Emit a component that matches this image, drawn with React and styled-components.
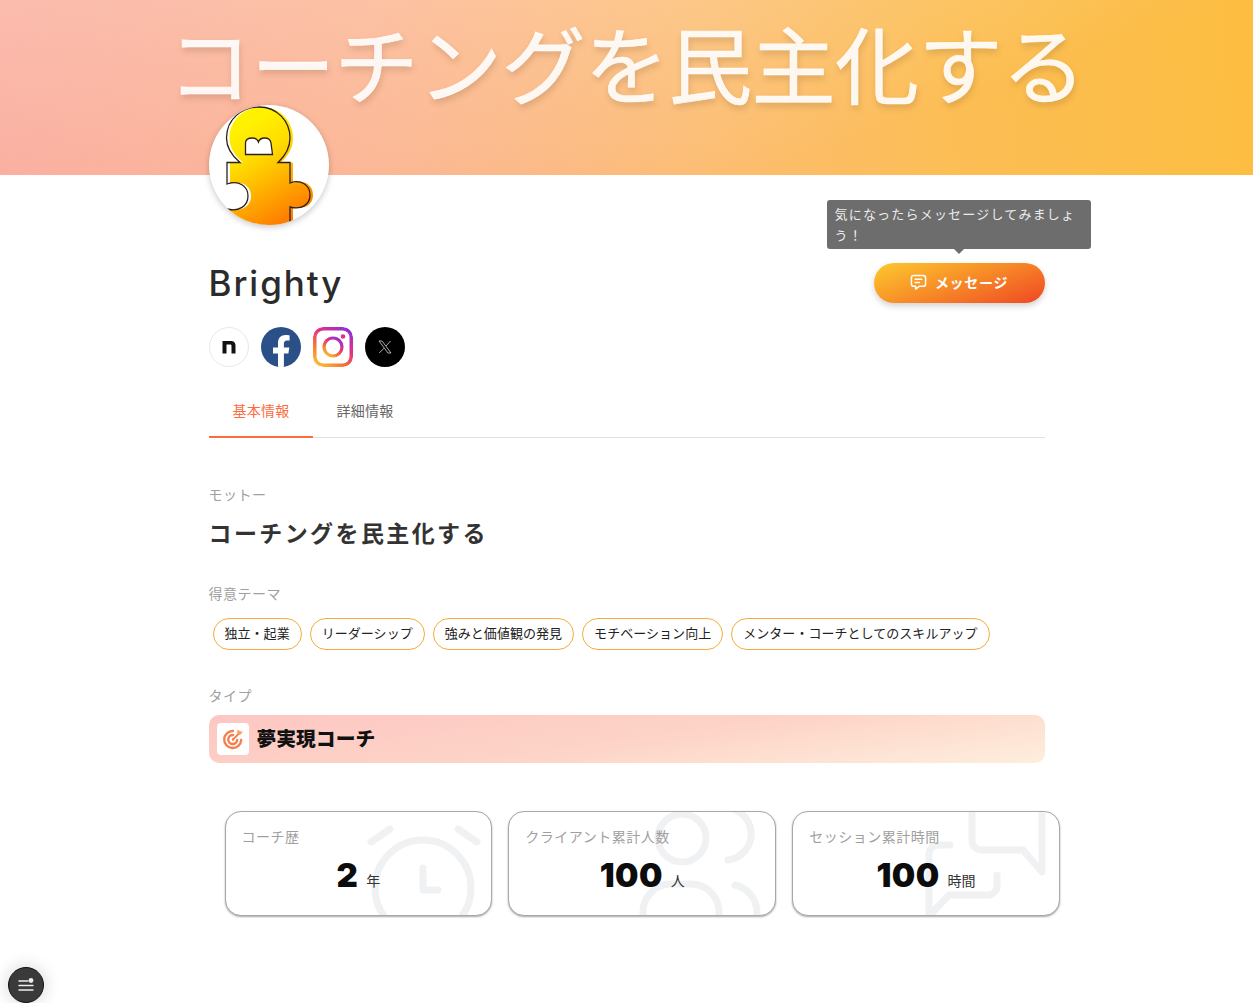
import React from "react";
import styled, { createGlobalStyle } from "styled-components";

const Global = createGlobalStyle`
  html, body { margin: 0; padding: 0; background: #fff; }
  body { font-family: "Noto Sans CJK JP", "Noto Sans", sans-serif; color: #333; overflow-x: hidden; }
  * { box-sizing: border-box; }
`;
const Page = styled.div`height: 1003px; overflow: hidden;`;
const Hero = styled.header`
  height: 175px;
  background: linear-gradient(160deg, rgba(255,255,255,.32), rgba(255,255,255,.14) 45%, rgba(255,255,255,0) 72%),
    linear-gradient(84deg, #f99b88 0%, #fbae88 30%, #fcbc72 55%, #fcbe55 75%, #fcbd40 100%);
  display: flex;
  justify-content: center;
  overflow: hidden;
`;
const HeroTitle = styled.h1`
  margin: 0;
  padding: 1px 0 0;
  font-size: 84px;
  line-height: 122px;
  height: 123px;
  font-weight: 400;
  letter-spacing: -0.6px;
  white-space: nowrap;
  color: rgba(255, 255, 255, 0.9);
  -webkit-text-stroke: 0.7px rgba(255, 255, 255, 0.85);
  text-shadow: 1px 4px 6px rgba(120, 80, 40, 0.24);
`;
const Main = styled.main`width: 836px; margin: 0 auto; position: relative;`;
const AvatarWrap = styled.div`
  width: 120px; height: 120px; border-radius: 50%;
  margin-top: -70px; background: #fff; overflow: hidden;
  box-shadow: 0 2px 6px rgba(0,0,0,.22);
  position: relative;
`;
const NameRow = styled.div`
  margin-top: 38px; height: 40px;
  display: flex; justify-content: space-between; align-items: center;
`;
const Name = styled.h2`
  margin: 0; font-family: Inter, sans-serif; font-size: 35px; font-weight: 500;
  letter-spacing: 1.95px; line-height: 40px; color: #2b2b2b;
`;
const MessageWrap = styled.div`position: relative;`;
const Tooltip = styled.div`
  position: absolute; left: -47px; bottom: 54px; width: 264px;
  background: #6d6d6d; color: #ececec; border-radius: 3px;
  font-size: 13px; line-height: 21px; letter-spacing: 1.2px; padding: 3px 8px 4px;
  &::after {
    content: ""; position: absolute; left: 127px; bottom: -5px;
    border-left: 5px solid transparent; border-right: 5px solid transparent; border-top: 5px solid #6d6d6d;
  }
`;
const MessageButton = styled.button`
  width: 171px; height: 40px; border: 0; border-radius: 20px;
  background: linear-gradient(160deg, #fdc92e 0%, #f78a27 50%, #ef4723 100%);
  box-shadow: 0 3px 6px rgba(0,0,0,.18);
  color: #fff; font-family: inherit; font-size: 14px; font-weight: 700; letter-spacing: .7px;
  display: flex; align-items: center; justify-content: center; gap: 8px; padding: 0 0 2px;
`;
const Socials = styled.div`display: flex; gap: 12px; margin-top: 24px;`;
const Social = styled.a`
  width: 40px; height: 40px; border-radius: ${p => p.$square ? "10px" : "50%"};
  background: ${p => p.$bg || "#fff"};
  border: ${p => p.$outlined ? "1px solid #e8e8e8" : "0"};
  display: flex; align-items: center; justify-content: center; overflow: hidden;
`;
const Tabs = styled.nav`display: flex; margin-top: 21px; border-bottom: 1px solid #e0e0e0; height: 50px;`;
const Tab = styled.div`
  width: 104px; height: 50px; display: flex; align-items: center; justify-content: center;
  font-size: 14px; letter-spacing: .2px; padding: 0 0 4px 1px;
  color: ${p => p.$active ? "#fb6d3f" : "#666"};
  border-bottom: 2px solid ${p => p.$active ? "#fb6d3f" : "transparent"};
`;
const Label = styled.div`
  font-size: 14px; line-height: 20px; letter-spacing: .5px; color: #a0a0a0;
`;
const MottoLabel = styled(Label)`margin-top: 46px;`;
const Motto = styled.div`
  margin-top: 12px; font-size: 23px; line-height: 32px; font-weight: 700; letter-spacing: 2.4px; color: #333;
`;
const ThemeLabel = styled(Label)`margin-top: 35px;`;
const Chips = styled.div`display: flex; gap: 8px; margin: 15px 0 0 4px;`;
const Chip = styled.span`
  height: 32px; border: 1px solid #f5ac3c; border-radius: 16px; padding: 0 11px 4px;
  display: flex; align-items: center; font-size: 13px; letter-spacing: .04px; color: #222; white-space: nowrap;
`;
const TypeLabel = styled(Label)`margin-top: 35px;`;
const TypeBar = styled.div`
  margin-top: 10px; height: 48px; border-radius: 10px; padding: 0 8px;
  background: linear-gradient(172deg, #fdc7c3 0%, #fdd3c6 50%, #feeedd 100%);
  display: flex; align-items: center; gap: 8px;
`;
const TypeIcon = styled.div`
  width: 32px; height: 32px; background: #fff; border-radius: 4px;
  display: flex; align-items: center; justify-content: center;
`;
const TypeName = styled.div`font-size: 19.8px; font-weight: 900; color: #111; padding-bottom: 3px;`;
const Stats = styled.section`
  width: 835.5px; margin: 48px 0 0 16px;
  display: grid; grid-template-columns: repeat(3, 1fr); gap: 16px;
`;
const Card = styled.article`
  position: relative; height: 105px; border: 1px solid #a8a8a8; border-radius: 16px; background: #fff;
  overflow: hidden; padding: 14px 16px; box-shadow: 0 1px 2px rgba(0,0,0,.35);
`;
const CardArt = styled.svg`
  position: absolute; left: 0; top: 0; width: 100%; height: 100%;
  fill: none; stroke: #f0f1f3; stroke-width: 7; stroke-linecap: round; stroke-linejoin: round;
`;
const CardLabel = styled(Label)`position: relative;`;
const CardValue = styled.div`
  position: relative; margin-top: 7px; display: flex; justify-content: center; align-items: flex-end; gap: 8px;
`;
const Number = styled.span`
  font-family: Inter, "Liberation Sans", sans-serif; font-size: 33px; line-height: 44px; font-weight: 900; color: #0c0c0c; letter-spacing: .4px;
`;
const Unit = styled.span`font-size: 14px; line-height: 20px; margin-bottom: 7px; color: #333;`;
const Fab = styled.button`
  position: fixed; left: 8px; top: 967px; width: 36px; height: 36px; border-radius: 50%;
  background: #3a3a3a; border: 1px solid #111; padding: 0;
  box-shadow: 0 0 14px 4px rgba(0,0,0,.1);
  display: flex; align-items: center; justify-content: center;
`;

const Avatar = () => {
  const d = "M31 57.5 C22 50 17.5 42 17.5 33 C17.5 14 33 2 50 2 C68 2 81 16 81 33 C81 43 76 51 69 57.5 H81 V78 C92 74 101 80 101 90 C101 100 92 105 81 102 V125 H18 V104 C30 107 39 101 39 91 C39 81 30 75 18 79 V57.5 Z";
  return (
    <AvatarWrap>
      <svg width="120" height="120" viewBox="0 0 120 120">
        <defs>
          <linearGradient id="pz" x1="0.3" y1="0.1" x2="0.65" y2="1">
            <stop offset="0" stopColor="#fff200" />
            <stop offset=".3" stopColor="#ffdc00" />
            <stop offset="1" stopColor="#ff7300" />
          </linearGradient>
        </defs>
        <path d={d} fill="url(#pz)" transform="translate(3 0)" />
        <path d={d} fill="none" stroke="#2a2218" strokeWidth="1.3" />
        <path d="M37 49.5 V38 C37 34 40 33 44 33 C47 33 49 34 50 37 C51 34 53 33 56 33 C60 33 62 34 62.5 38 L64 49.5 Z" fill="#fff" stroke="#2a2218" strokeWidth="1.3" transform="translate(-.5 0)" />
      </svg>
    </AvatarWrap>
  );
};

const Instagram = () => (
  <svg width="40" height="40" viewBox="0 0 40 40">
    <defs>
      <linearGradient id="ig" x1="0.15" y1="1" x2="0.85" y2="0">
        <stop offset="0" stopColor="#fdc33a" />
        <stop offset=".3" stopColor="#f7792f" />
        <stop offset=".6" stopColor="#e6347f" />
        <stop offset="1" stopColor="#8e2ee0" />
      </linearGradient>
    </defs>
    <rect width="40" height="40" rx="10" fill="url(#ig)" />
    <rect x="3.5" y="3.5" width="33" height="33" rx="7" fill="#fff" />
    <circle cx="20" cy="20" r="9" fill="none" stroke="url(#ig)" strokeWidth="3.2" />
    <circle cx="30" cy="9.5" r="2.3" fill="#d9338f" />
  </svg>
);

const Target = () => (
  <svg width="22" height="22" viewBox="0 0 22 22" fill="none" stroke="#f47f4d" strokeLinecap="round">
    <path d="M11 3 A8.5 8.5 0 1 0 19.2 12" strokeWidth="2.4" />
    <path d="M11 7 A4.5 4.5 0 1 0 15.2 12" strokeWidth="2.4" />
    <circle cx="11" cy="11.5" r="1.2" fill="#f47f4d" stroke="none" />
    <path d="M11 11.5 L17 5.5" strokeWidth="1.8" />
    <path d="M15 5 L15.5 1.5 L18 3.2 L21 3.8 L18 7 Z" fill="#f8a05f" stroke="none" />
  </svg>
);

export default function App() {
  return (
    <Page>
      <Global />
      <Hero><HeroTitle>コーチングを民主化する</HeroTitle></Hero>
      <Main>
        <Avatar />
        <NameRow>
          <Name>Brighty</Name>
          <MessageWrap>
            <Tooltip>気になったらメッセージしてみましょう！</Tooltip>
            <MessageButton>
              <svg width="17" height="18" viewBox="0 0 18 18" fill="none" stroke="#fff" strokeWidth="1.6" strokeLinecap="round" strokeLinejoin="round">
                <path d="M4 2 H14 A2.5 2.5 0 0 1 16.5 4.5 V11 A2.5 2.5 0 0 1 14 13.5 H10 L6 16.5 V13.5 H4 A2.5 2.5 0 0 1 1.5 11 V4.5 A2.5 2.5 0 0 1 4 2 Z" />
                <path d="M5.5 6 H12.5 M5.5 9.5 H10" />
              </svg>
              メッセージ
            </MessageButton>
          </MessageWrap>
        </NameRow>
        <Socials>
          <Social $outlined>
            <svg width="16" height="14" viewBox="0 0 16 14"><path d="M1.5 1 H10 C13 1 14.5 2.8 14.5 5.5 V13.5 H10.5 V6 C10.5 5 10 4.6 9 4.6 H5.5 V13.5 H1.5 Z" fill="#111" /></svg>
          </Social>
          <Social $bg="#2a5087">
            <svg width="40" height="40" viewBox="0 0 40 40"><path d="M17 40 V26.5 H12 V20.5 H17 V16 C17 10.8 20 8 24.6 8 C26.6 8 28.6 8.3 28.6 8.3 V13.4 H26.1 C23.6 13.4 22.9 14.9 22.9 16.5 V20.5 H28.3 L27.4 26.5 H22.9 V40 Z" fill="#fff" /></svg>
          </Social>
          <Social $square><Instagram /></Social>
          <Social $bg="#000">
            <svg width="14" height="14" viewBox="0 0 14 14" fill="none" stroke="#bdbdbd" strokeWidth="0.9">
              <path d="M1 1 H4 L13 13 H10 Z" />
              <path d="M12.5 1 L8 6 M6 8.2 L1.2 13" />
            </svg>
          </Social>
        </Socials>
        <Tabs>
          <Tab $active>基本情報</Tab>
          <Tab>詳細情報</Tab>
        </Tabs>
        <MottoLabel>モットー</MottoLabel>
        <Motto>コーチングを民主化する</Motto>
        <ThemeLabel>得意テーマ</ThemeLabel>
        <Chips>
          <Chip>独立・起業</Chip>
          <Chip>リーダーシップ</Chip>
          <Chip>強みと価値観の発見</Chip>
          <Chip>モチベーション向上</Chip>
          <Chip>メンター・コーチとしてのスキルアップ</Chip>
        </Chips>
        <TypeLabel>タイプ</TypeLabel>
        <TypeBar>
          <TypeIcon><Target /></TypeIcon>
          <TypeName>夢実現コーチ</TypeName>
        </TypeBar>
        <Stats>
          <Card>
            <CardArt viewBox="0 0 266 103" preserveAspectRatio="xMinYMin slice">
              <circle cx="197" cy="76" r="48" />
              <path d="M145 30 L164 17 M232 17 L251 30 M197 56 V78 H212" />
            </CardArt>
            <CardLabel>コーチ歴</CardLabel>
            <CardValue><Number>2</Number><Unit>年</Unit></CardValue>
          </Card>
          <Card>
            <CardArt viewBox="0 0 266 103" preserveAspectRatio="xMinYMin slice">
              <circle cx="173" cy="26" r="24" />
              <path d="M213 -4 a26 26 0 0 1 6 52 M134 110 V100 a28 28 0 0 1 28 -28 h20 a28 28 0 0 1 28 28 V110 M226 73 a28 28 0 0 1 22 28 v10" />
            </CardArt>
            <CardLabel>クライアント累計人数</CardLabel>
            <CardValue><Number>100</Number><Unit>人</Unit></CardValue>
          </Card>
          <Card>
            <CardArt viewBox="0 0 266 103" preserveAspectRatio="xMinYMin slice">
              <path d="M179 -5 V29 a9 9 0 0 0 9 9 H230 L249 60 V-5" />
              <path d="M157 33 H145 a9 9 0 0 0 -9 9 V104 L156 83 H195 a9 9 0 0 0 9 -9 V63" />
            </CardArt>
            <CardLabel>セッション累計時間</CardLabel>
            <CardValue><Number>100</Number><Unit>時間</Unit></CardValue>
          </Card>
        </Stats>
      </Main>
      <Fab aria-label="menu">
        <svg width="18" height="16" viewBox="0 0 18 16" fill="none" stroke="#eee" strokeWidth="1.4" strokeLinecap="round">
          <path d="M2 4 H11 M2 8.5 H16 M2 13 H16" />
          <circle cx="14" cy="3.5" r="2.4" fill="#eee" stroke="none" />
        </svg>
      </Fab>
    </Page>
  );
}
